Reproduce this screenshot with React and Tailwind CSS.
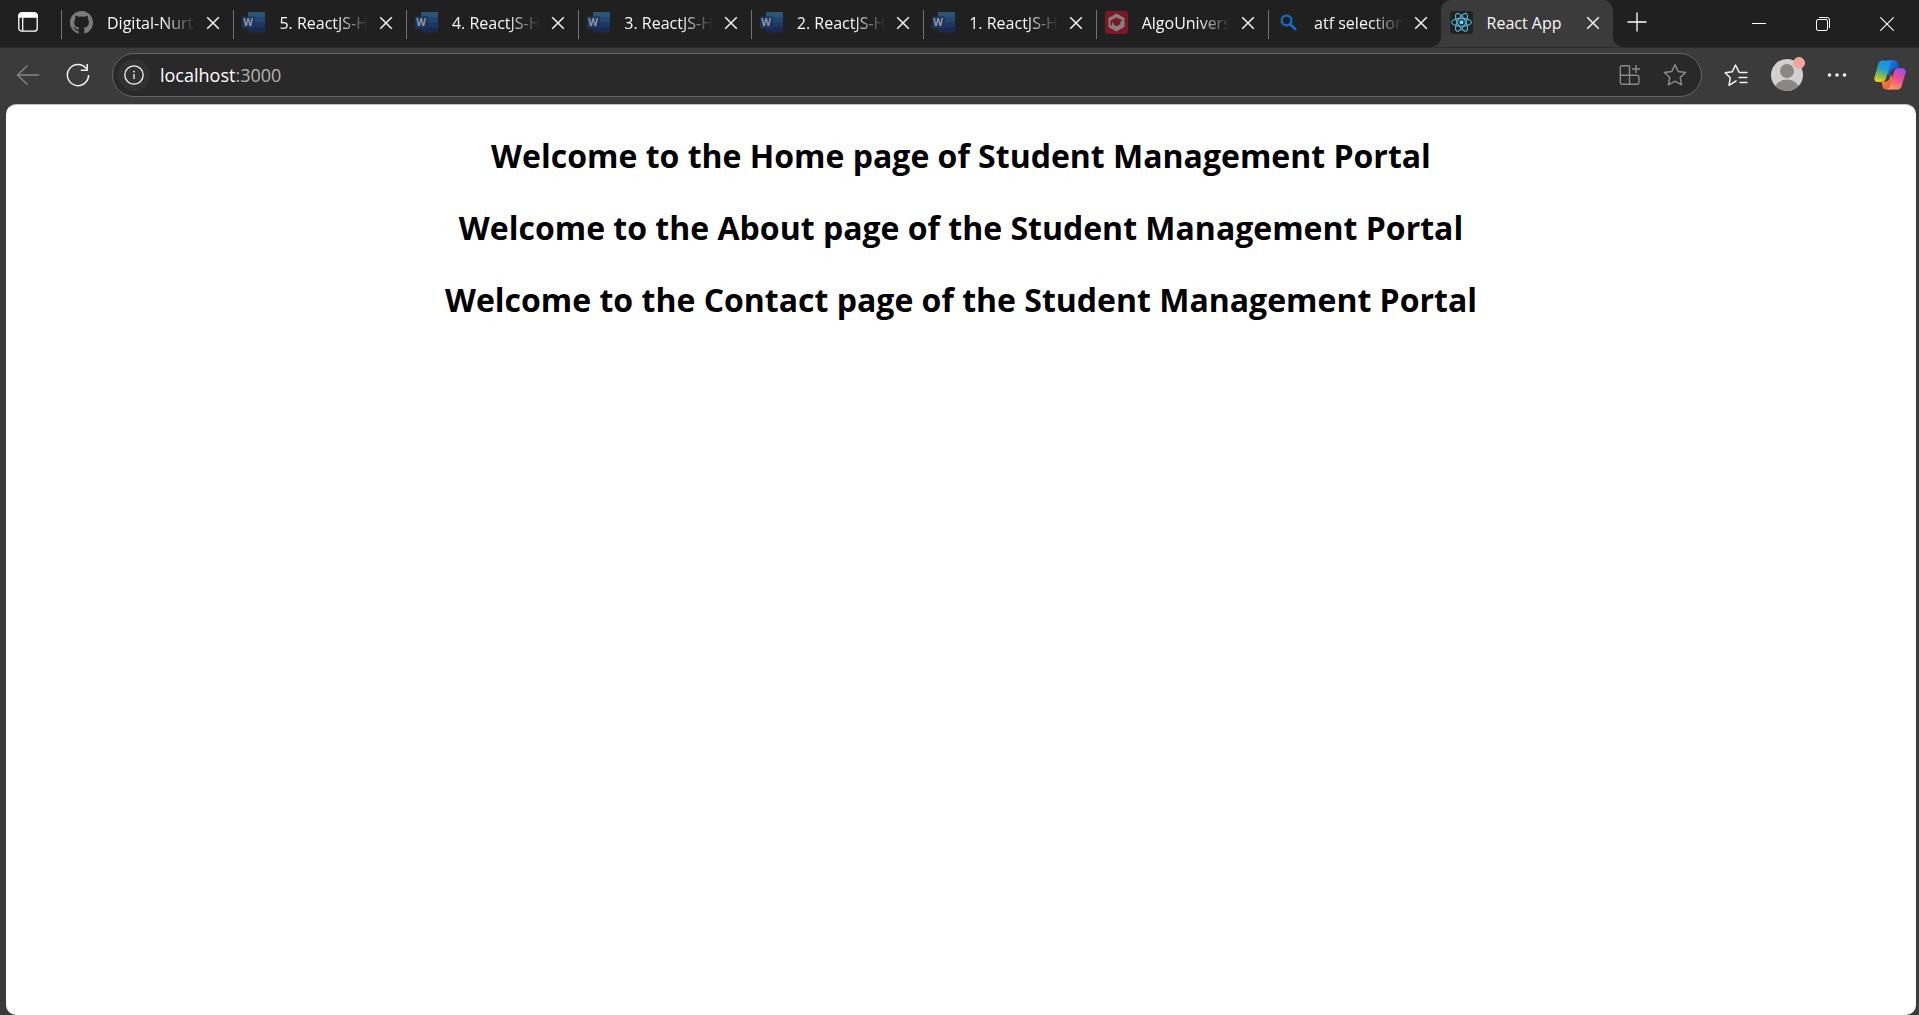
import React from "react";

function GithubIcon() {
  return (
    <svg viewBox="0 0 16 16" className="size-[23px]" fill="#7b7b7b" aria-hidden="true">
      <path d="M8 0C3.58 0 0 3.58 0 8c0 3.54 2.29 6.53 5.47 7.59.4.07.55-.17.55-.38 0-.19-.01-.82-.01-1.49-2.01.37-2.53-.49-2.69-.94-.09-.23-.48-.94-.82-1.13-.28-.15-.68-.52-.01-.53.63-.01 1.08.58 1.23.82.72 1.21 1.87.87 2.33.66.07-.52.28-.87.51-1.07-1.78-.2-3.64-.89-3.64-3.95 0-.87.31-1.59.82-2.15-.08-.2-.36-1.02.08-2.12 0 0 .67-.21 2.2.82.64-.18 1.32-.27 2-.27s1.36.09 2 .27c1.53-1.04 2.2-.82 2.2-.82.44 1.1.16 1.92.08 2.12.51.56.82 1.27.82 2.15 0 3.07-1.87 3.75-3.65 3.95.29.25.54.73.54 1.48 0 1.07-.01 1.93-.01 2.2 0 .21.15.46.55.38A8.01 8.01 0 0 0 16 8c0-4.42-3.58-8-8-8z" />
    </svg>
  );
}

function WordIcon() {
  return (
    <svg viewBox="0 0 23 23" className="size-[23px]" aria-hidden="true">
      <rect x="6" y="1" width="17" height="5.5" fill="#2b5571" />
      <rect x="6" y="6" width="17" height="5.5" fill="#224872" />
      <rect x="6" y="11" width="17" height="5.5" fill="#1d3763" />
      <rect x="6" y="16" width="17" height="5.5" fill="#192a4e" />
      <rect x="0" y="5.500" width="13" height="12" rx="1" fill="#1b3460" />
      <text x="6" y="15" textAnchor="middle" fontFamily="Open Sans, sans-serif" fontWeight="700" fontSize="10" fill="#94979e">
        W
      </text>
    </svg>
  );
}

function AlgoIcon() {
  return (
    <svg viewBox="0 0 23 23" className="size-[23px]" aria-hidden="true">
      <rect width="23" height="23" rx="2.500" fill="#7b1824" />
      <path d="M11.500 2.500 19.500 7v9l-8 4.500-8-4.500V7z" fill="#857f80" />
      <path d="M11.500 6.500 17.500 9.500l-2.200 1.200v2.500l-3.800 2-3.300-2v-2l-1.200.2v3H5.500V9.500z" fill="#7b1824" />
    </svg>
  );
}

function SearchIcon() {
  return (
    <svg viewBox="0 0 23 23" className="size-[23px]" fill="none" stroke="#0f70ca" aria-hidden="true">
      <circle cx="9.500" cy="9.500" r="4.900" strokeWidth="2.200" />
      <path d="m13 13 5.200 5.200" strokeWidth="2.600" strokeLinecap="round" />
    </svg>
  );
}

function ReactIcon() {
  return (
    <svg viewBox="0 0 23 23" className="size-[23px]" fill="none" stroke="#4fb9d3" strokeWidth="1.100" aria-hidden="true">
      <rect width="23" height="23" rx="3" fill="#222222" stroke="none" />
      <ellipse cx="11.500" cy="11.300" rx="10" ry="3.900" />
      <ellipse cx="11.500" cy="11.300" rx="10" ry="3.900" transform="rotate(60 11.500 11.300)" />
      <ellipse cx="11.500" cy="11.300" rx="10" ry="3.900" transform="rotate(120 11.500 11.300)" />
      <circle cx="11.500" cy="11.300" r="2" fill="#61dafb" stroke="none" />
    </svg>
  );
}

function CrossIcon() {
  return (
    <svg viewBox="0 0 14 14" className="size-[14px]" stroke="#ececec" strokeWidth="1.600" fill="none" aria-hidden="true">
      <path d="m1.200 1.200 11.600 11.600M12.800 1.200 1.200 12.800" />
    </svg>
  );
}

function CopilotIcon() {
  return (
    <svg viewBox="0 0 32 30" className="h-[30px] w-8" aria-hidden="true">
      <defs>
        <linearGradient id="cp-left" x1="0.600" y1="0" x2="0.300" y2="1">
          <stop offset="0" stopColor="#1a8fec" />
          <stop offset="0.400" stopColor="#1f9ed0" />
          <stop offset="0.700" stopColor="#7cb85a" />
          <stop offset="1" stopColor="#f5cf10" />
        </linearGradient>
        <linearGradient id="cp-right" x1="0.700" y1="0" x2="0.350" y2="1">
          <stop offset="0" stopColor="#a54bea" />
          <stop offset="0.500" stopColor="#ee5090" />
          <stop offset="1" stopColor="#ff9a5e" />
        </linearGradient>
        <linearGradient id="cp-top" x1="0" y1="0" x2="1" y2="1">
          <stop offset="0" stopColor="#1784e8" />
          <stop offset="1" stopColor="#1b3fc4" />
        </linearGradient>
        <linearGradient id="cp-bottom" x1="0" y1="0" x2="1" y2="1">
          <stop offset="0" stopColor="#f7a02a" />
          <stop offset="1" stopColor="#ee4a3c" />
        </linearGradient>
      </defs>
      <path d="M15 .5h5.500c2 0 2.800 1.300 3.300 3l1.200 4.700h-3.500c-2.500 0-3.500 1.300-4.200 3.600L14.600 16.500l-2-3z" fill="url(#cp-top)" />
      <path d="M17 29.500h-5c-2 0-2.800-1.300-3.300-3L7.500 21.500H11c2.500 0 3.500-1.300 4.200-3.600l1.800-4 1.500 4z" fill="url(#cp-bottom)" />
      <path d="M8.500.5h11c-2 .3-2.800 1.800-3.400 3.800l-3.700 13c-.8 2.800-2 4.700-5.200 4.700H4c-3 0-4.300-2-3.400-5L4 5C4.800 2.200 6 .5 8.500.5z" fill="url(#cp-left)" />
      <path d="M23.500 29.500h-11c2-.3 2.800-1.800 3.400-3.800l3.700-13c.8-2.800 2-4.500 5.200-4.500H28c3 0 4.300 2 3.400 5L28 25c-.8 2.800-2 4.500-4.500 4.500z" fill="url(#cp-right)" />
      <path d="m17.200 11.500-3.600 8.800 1.400-.8 3.900-9.700c-.9.300-1.400.9-1.700 1.700z" fill="#3b3b3b" />
    </svg>
  );
}

const tabs = [
  { title: "Digital-Nurt", Icon: GithubIcon },
  { title: "5. ReactJS-H", Icon: WordIcon },
  { title: "4. ReactJS-H", Icon: WordIcon },
  { title: "3. ReactJS-H", Icon: WordIcon },
  { title: "2. ReactJS-H", Icon: WordIcon },
  { title: "1. ReactJS-H", Icon: WordIcon },
  { title: "AlgoUnivers", Icon: AlgoIcon },
  { title: "atf selection", Icon: SearchIcon },
  { title: "React App", Icon: ReactIcon, active: true },
];

function Tab({ title, Icon, active }) {
  return (
    <div className={active ? "relative flex min-w-0 items-center rounded-t-[10px] bg-[#3b3b3b] pb-0.5 pl-2" : "relative flex min-w-0 items-center pb-0.5 pl-2"}>
      {active ? (
        <>
          <span className="absolute bottom-0 right-full size-2.5 bg-[#3b3b3b]">
            <span className="block size-full rounded-br-[10px] bg-[#202020]" />
          </span>
          <span className="absolute bottom-0 left-full size-2.5 bg-[#3b3b3b]">
            <span className="block size-full rounded-bl-[10px] bg-[#202020]" />
          </span>
        </>
      ) : (
        <span className="absolute left-0 top-2.5 h-[29px] w-px bg-[#747474]" />
      )}
      <button type="button" role="tab" aria-selected={Boolean(active)} className="flex min-w-0 flex-1 items-center gap-3.5 pl-px text-left">
        <span className="shrink-0">
          <Icon />
        </span>
        <span className={active ? "whitespace-nowrap text-base text-[#f8f8f8]" : "min-w-0 flex-1 overflow-hidden whitespace-nowrap text-base text-[#f8f8f8] [mask-image:linear-gradient(to_right,black_calc(100%-32px),transparent)]"}>
          {title}
        </span>
      </button>
      <button type="button" aria-label={`Close ${title}`} className="mr-0.5 flex h-6 w-9 shrink-0 items-center justify-center">
        <CrossIcon />
      </button>
    </div>
  );
}

function TabStrip() {
  return (
    <header className="flex h-[47px] bg-[#202020]">
      <button type="button" aria-label="Tab actions" className="flex w-[61px] shrink-0 items-center pb-1 pl-[18px]">
        <svg viewBox="0 0 20 20" className="size-5" fill="none" stroke="#ffffff" strokeWidth="1.300" aria-hidden="true">
          <rect x=".8" y=".8" width="18.400" height="18.400" rx="3" />
          <path d="M1 5V3.500A2.500 2.500 0 0 1 3.500 1h13A2.500 2.500 0 0 1 19 3.500V5z" fill="#ffffff" />
          <path d="M4.700 5v14" />
        </svg>
      </button>
      <div role="tablist" className="grid min-w-0 flex-1 grid-cols-9">
        {tabs.map((tab) => (
          <Tab key={tab.title} {...tab} />
        ))}
      </div>
      <button type="button" aria-label="New tab" className="flex w-12 shrink-0 items-center justify-center pb-1">
        <svg viewBox="0 0 20 20" className="size-5" stroke="#ffffff" strokeWidth="1.300" aria-hidden="true">
          <path d="M10 .5v19M.5 10h19" />
        </svg>
      </button>
      <div className="ml-[66px] flex shrink-0">
        <button type="button" aria-label="Minimize" className="flex w-16 items-center justify-center">
          <svg viewBox="0 0 14 14" className="size-3.5" stroke="#ffffff" strokeWidth="1" aria-hidden="true">
            <path d="M0 6.500h14" />
          </svg>
        </button>
        <button type="button" aria-label="Restore" className="flex w-16 items-center justify-center">
          <svg viewBox="0 0 14 14" className="size-3.5" fill="none" stroke="#ffffff" strokeWidth="1" aria-hidden="true">
            <rect x=".5" y="2.500" width="11" height="11" rx="1.500" />
            <path d="M3 .5h8A2.500 2.500 0 0 1 13.500 3v8" />
          </svg>
        </button>
        <button type="button" aria-label="Close window" className="flex w-16 items-center justify-center">
          <svg viewBox="0 0 14 14" className="size-3.5" stroke="#ffffff" strokeWidth="1.100" aria-hidden="true">
            <path d="m.3.3 13.400 13.400M13.700.3.3 13.700" />
          </svg>
        </button>
      </div>
    </header>
  );
}

function Toolbar() {
  return (
    <div className="flex h-[57px] items-center border-t border-[#2c2c2c] pb-0.5 pl-4 pr-[13px]">
      <button type="button" aria-label="Back" className="flex size-6 items-center justify-center">
        <svg viewBox="0 0 24 22" className="h-[22px] w-6" fill="none" stroke="#858585" strokeWidth="1.400" aria-hidden="true">
          <path d="M23 11H1.500M11.500 1.500 1.500 11l10 9.500" />
        </svg>
      </button>
      <button type="button" aria-label="Refresh" className="ml-[26px] flex size-6 items-center justify-center">
        <svg viewBox="0 0 24 24" className="size-6" fill="none" stroke="#f2f2f2" strokeWidth="1.500" aria-hidden="true">
          <path d="M22.600 12A10.600 10.600 0 1 1 20.500 5.700" />
          <path d="M21.200 1v6.200h-6.400" />
        </svg>
      </button>
      <div className="ml-[22px] flex h-11 min-w-0 flex-1 items-center rounded-full border border-[#666666] bg-[#292929] pl-[5px] pr-3.5">
        <button type="button" aria-label="View site information" className="flex size-8 shrink-0 items-center justify-center rounded-full bg-[#323232]">
          <svg viewBox="0 0 20 20" className="size-5" fill="none" stroke="#f2f2f2" strokeWidth="1.300" aria-hidden="true">
            <circle cx="10" cy="10" r="9.200" />
            <path d="M10 9v5" />
            <circle cx="10" cy="6.600" r=".9" fill="#f2f2f2" stroke="none" />
          </svg>
        </button>
        <a href="http://localhost:3000" className="ml-2.5 flex-1 text-lg text-[#b4b4b4]">
          <span className="text-white">localhost</span>:3000
        </a>
        <button type="button" aria-label="Install app" className="flex size-6 items-center justify-center">
          <svg viewBox="0 0 22 22" className="size-[22px]" fill="none" stroke="#8a8a8a" strokeWidth="1.400" aria-hidden="true">
            <path d="M10.500 1.700H3.200A1.900 1.900 0 0 0 1.300 3.600v14.800a1.900 1.900 0 0 0 1.900 1.900h14.800a1.900 1.900 0 0 0 1.900-1.900v-5.200a1.900 1.900 0 0 0-1.900-1.900H1.300M10.500 1.700v18.600" />
            <path d="M17 1v8M13 5h8" />
          </svg>
        </button>
        <button type="button" aria-label="Add to favorites" className="ml-[21px] flex size-6 items-center justify-center">
          <svg viewBox="0 0 24 24" className="size-6" fill="none" stroke="#8a8a8a" strokeWidth="1.500" strokeLinejoin="round" aria-hidden="true">
            <path d="m12 1.700 3.200 6.700 7.400 1-5.400 5.100 1.400 7.300L12 18.200l-6.600 3.600 1.400-7.300L1.400 9.400l7.400-1z" />
          </svg>
        </button>
      </div>
      <button type="button" aria-label="Favorites" className="ml-[22px] flex size-6 items-center justify-center">
        <svg viewBox="0 0 24 24" className="size-6" fill="none" stroke="#f2f2f2" strokeWidth="1.500" strokeLinejoin="round" strokeLinecap="round" aria-hidden="true">
          <path d="M15.300 9.300 14.800 8.700 11.500 2 8.200 8.800 1.200 9.800l5.100 5-1.300 7.500 7-4.300" />
          <path d="M16 9.500h7" />
          <path d="M15 14.500h8M16 19.500h7" strokeWidth="1.300" />
        </svg>
      </button>
      <button type="button" aria-label="Profile" className="relative ml-[23px] size-8">
        <svg viewBox="0 0 32 32" className="size-8" aria-hidden="true">
          <defs>
            <clipPath id="avatar-clip">
              <circle cx="16" cy="16" r="16" />
            </clipPath>
          </defs>
          <g clipPath="url(#avatar-clip)">
            <rect width="32" height="32" fill="#d2d0ce" />
            <circle cx="16" cy="12" r="7" fill="#8a8886" />
            <ellipse cx="16" cy="30" rx="12" ry="9.500" fill="#8a8886" />
          </g>
        </svg>
        <span className="absolute -right-0.5 -top-0.5 size-3 rounded-full border border-[#d8b8b6] bg-[#fba19c]" />
      </button>
      <button type="button" aria-label="Settings and more" className="ml-[22px] flex size-6 items-center justify-center">
        <svg viewBox="0 0 20 4" className="h-1 w-5" fill="#f2f2f2" aria-hidden="true">
          <circle cx="2.500" cy="2" r="1.800" />
          <circle cx="10" cy="2" r="1.800" />
          <circle cx="17.500" cy="2" r="1.800" />
        </svg>
      </button>
      <button type="button" aria-label="Copilot" className="ml-[25px]">
        <CopilotIcon />
      </button>
    </div>
  );
}

const headings = [
  "Welcome to the Home page of Student Management Portal",
  "Welcome to the About page of the Student Management Portal",
  "Welcome to the Contact page of the Student Management Portal",
];

export default function App() {
  return (
    <div className="flex min-h-screen flex-col bg-[#3b3b3b] font-['Open_Sans',sans-serif]">
      <TabStrip />
      <Toolbar />
      <main className="ml-1.5 mr-[3px] flex flex-1 flex-col gap-6 rounded-[10px] border-t border-[#c4c4c4] bg-white pt-[27px] text-center text-black">
        {headings.map((text) => (
          <h2 key={text} className="text-[32px] font-bold leading-[48px]">
            {text}
          </h2>
        ))}
      </main>
    </div>
  );
}
